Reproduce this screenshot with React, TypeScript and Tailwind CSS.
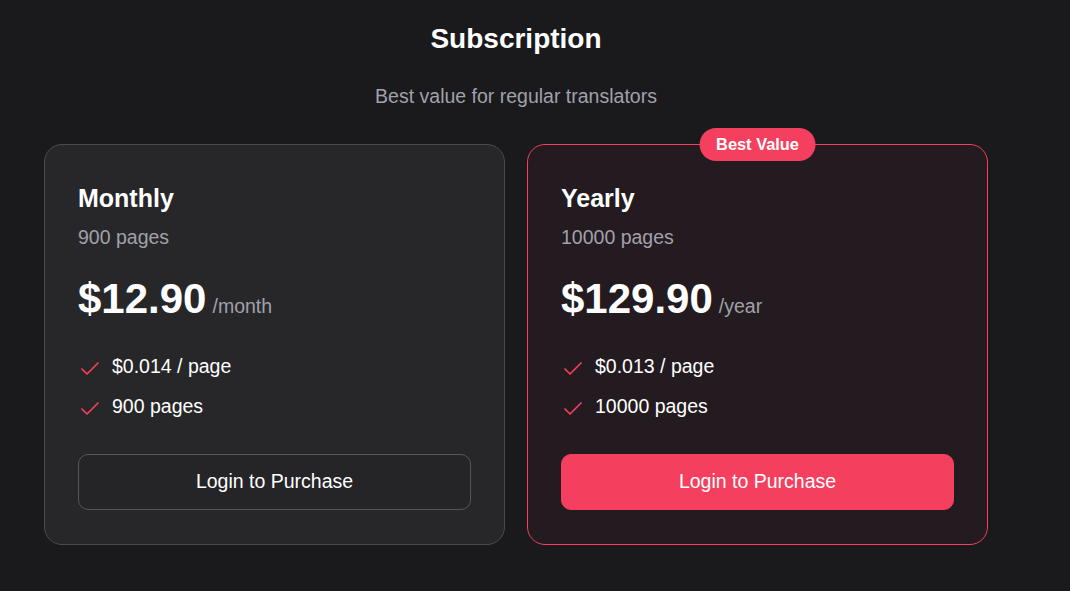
import { Check } from "lucide-react";

type Plan = {
  name: string;
  pages: string;
  price: string;
  period: string;
  perPage: string;
  featured?: boolean;
};

const plans: Plan[] = [
  { name: "Monthly", pages: "900", price: "$12.90", period: "/month", perPage: "$0.014" },
  { name: "Yearly", pages: "10000", price: "$129.90", period: "/year", perPage: "$0.013", featured: true },
];

const PlanCard = ({ plan }: { plan: Plan }) => {
  return (
    <div
      className={
        plan.featured
          ? "relative flex w-[461px] flex-col rounded-[18px] border border-[#f43f5e] bg-[#231b20] px-[33px] pt-[38px] pb-[34px]"
          : "relative flex w-[461px] flex-col rounded-[18px] border border-[#4a4a50] bg-[#27272a] px-[33px] pt-[38px] pb-[34px]"
      }
    >
      {/* badge sits over the top border */}
      {plan.featured && (
        <div className="absolute top-[-17px] left-1/2 flex h-[33px] -translate-x-1/2 items-center rounded-full bg-[#f43f5e] px-[17px] text-[16.4px] font-bold text-white">
          Best Value
        </div>
      )}
      <h2 className="text-[25px] leading-[30px] font-bold text-white">{plan.name}</h2>
      <p className="mt-[10px] text-[19.5px] leading-[28px] text-[#a1a1aa]">{plan.pages} pages</p>
      <div className="mt-6 flex items-baseline gap-[6px]">
        <span className="text-[42px] leading-[48px] font-bold text-white">{plan.price}</span>
        <span className="text-[19.5px] leading-[28px] text-[#a1a1aa]">{plan.period}</span>
      </div>
      <ul className="mt-[29px] flex flex-col gap-[11px]">
        <li className="flex items-start gap-[10px]">
          <Check className="mt-[5px] h-6 w-6 text-[#f43f5e]" strokeWidth={1.75} />
          <span className="text-[19.5px] leading-[28px] text-white">{plan.perPage} / page</span>
        </li>
        <li className="flex items-start gap-[10px]">
          <Check className="mt-[5px] h-6 w-6 text-[#f43f5e]" strokeWidth={1.75} />
          <span className="text-[19.5px] leading-[28px] text-white">{plan.pages} pages</span>
        </li>
      </ul>
      <button
        className={
          plan.featured
            ? "mt-[33px] h-[56px] w-full rounded-[10px] border border-[#f43f5e] bg-[#f43f5e] text-[19.5px] text-white"
            : "mt-[33px] h-[56px] w-full rounded-[10px] border border-[#55555b] bg-[#252528] text-[19.5px] text-white"
        }
      >
        Login to Purchase
      </button>
    </div>
  );
};

export default function App() {
  return (
    <div className="min-h-[591px] w-full bg-[#1a1a1c] font-['Liberation_Sans',Arial,sans-serif]">
      <div className="flex w-[1032px] flex-col items-center pt-[21px]">
        <h1 className="text-[28px] leading-[36px] font-bold text-white">Subscription</h1>
        <p className="mt-[25px] text-[19.5px] leading-[28px] text-[#a1a1aa]">
          Best value for regular translators
        </p>
        <div className="mt-[34px] flex gap-[22px]">
          {plans.map((p) => (
            <PlanCard key={p.name} plan={p} />
          ))}
        </div>
      </div>
    </div>
  );
}
